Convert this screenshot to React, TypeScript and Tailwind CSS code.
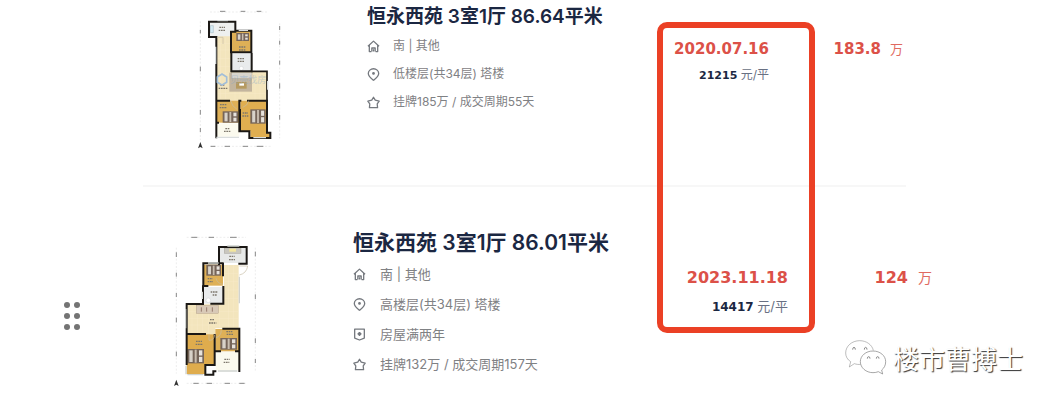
import type { ReactNode } from 'react';

type DetailIcon = 'house' | 'pin' | 'shield' | 'star';

interface Deal {
  id: string;
  title: string;
  details: { icon: DetailIcon; text: string }[];
  date: string;
  unitPrice: string;
  total: string;
}

const first: Deal = {
  id: 'low-floor',
  title: '恒永西苑 3室1厅 86.64平米',
  details: [
    { icon: 'house', text: '南 | 其他' },
    { icon: 'pin', text: '低楼层(共34层) 塔楼' },
    { icon: 'star', text: '挂牌185万 / 成交周期55天' },
  ],
  date: '2020.07.16',
  unitPrice: '21215',
  total: '183.8',
};

const second: Deal = {
  id: 'high-floor',
  title: '恒永西苑 3室1厅 86.01平米',
  details: [
    { icon: 'house', text: '南 | 其他' },
    { icon: 'pin', text: '高楼层(共34层) 塔楼' },
    { icon: 'shield', text: '房屋满两年' },
    { icon: 'star', text: '挂牌132万 / 成交周期157天' },
  ],
  date: '2023.11.18',
  unitPrice: '14417',
  total: '124',
};

const iconShapes: Record<DetailIcon, ReactNode> = {
  house: <path d="M1 6.8 7 1.2l6 5.6M2.5 5.6v6.9h2.2M11.5 5.6v6.9H9.3M5.2 12.5V8.6h3.6v3.9M7 10v2.5" />,
  pin: (
    <>
      <path d="M7 13.2C4.6 11.3 1.4 9 1.4 5.9a5.6 5.1 0 0 1 11.2 0C12.6 9 9.4 11.3 7 13.2Z" />
      <circle cx="7" cy="5.9" r="0.8" fill="currentColor" />
    </>
  ),
  shield: (
    <>
      <path d="M1.8 1.2h10.4v9.6L7 12.9l-5.2-2.1Z" />
      <path d="M7 4.2v4.4M4.8 6.4h4.4M5.7 5.2l2.6 2.4M8.3 5.2 5.7 7.6" />
    </>
  ),
  star: <path d="m7 1.4 1.9 3 4.2 1.2-2.1 3 .4 4H2.6l.4-4-2.1-3 4.2-1.2Z" />,
};

function Icon({ name }: { name: DetailIcon }) {
  return (
    <svg viewBox="0 0 14 14" aria-hidden="true" className="size-[13px] shrink-0 text-[#74787e]"
      fill="none" stroke="currentColor" strokeWidth="1.4" strokeLinejoin="round">
      {iconShapes[name]}
    </svg>
  );
}

function Bed({ x, y, w, h }: { x: number; y: number; w: number; h: number }) {
  return (
    <g>
      <rect x={x} y={y} width={w} height={h} fill="#75655a" />
      <rect x={x + w * 0.12} y={y + 4} width={w * 0.2} height={h - 8} fill="#d8d2c9" />
      <rect x={x + w * 0.44} y={y + 2} width={w * 0.12} height={h - 4} fill="#c9beb0" />
      <rect x={x + w * 0.7} y={y + 4} width={w * 0.2} height={h / 2 - 6} fill="#e6e2dc" />
      <rect x={x + w * 0.7} y={y + h / 2 + 2} width={w * 0.2} height={h / 2 - 6} fill="#e6e2dc" />
    </g>
  );
}

function LowFloorPlan() {
  return (
    <svg viewBox="0 0 360 480" role="img" aria-label="户型图" className="h-[160px] w-[120px] shrink-0">
      {/* dimension lines */}
      <g fill="none" stroke="#c9c9c9" strokeWidth="2">
        <path d="M90 36h172M90 439h182M61 64v356M299 70v345" strokeDasharray="6 5" strokeWidth="1" />
        <path d="M120 34h16M182 34h14M230 34h14M92 439h14M134 439h16M188 439h16M230 439h20" stroke="#888" strokeWidth="3" />
        <path d="M61 90v10M61 200v14M61 330v14M61 384v12M299 78v12M299 122v12M299 182v12M299 250v16M299 345v14" stroke="#888" strokeWidth="3" />
      </g>
      <path d="M61 426l7 19-7-4-7 4Z" fill="#333" />
      {/* rooms */}
      <path d="M110 106h43v108h108v88H110Z" fill="#f3e5bd" />
      <path d="M88 65h78v32h-13v12H88Z" fill="#eef0ef" />
      <path d="M154 94h60v64h-60Z" fill="#deb057" />
      <path d="M154 162h60v52h-60Z" fill="#e9ebec" />
      <path d="M110 302h70v66h-70Z" fill="#deb057" />
      <path d="M181 302h80v95h10v16h-60v-20h-30Z" fill="#e0ae50" />
      <path d="M110 370h68v40h-68Z" fill="#fbfaee" />
      <g stroke="#f8edcf" strokeWidth="1">
        <path d="M122 112v185M136 112v185M165 220v80M180 220v80M225 220v80M240 220v80M112 130h40M112 150h40M112 175h40M112 200h40M112 220h145M112 280h145" />
      </g>
      {/* furniture */}
      <Bed x={169} y={99} w={38} h={24} />
      <Bed x={128} y={334} w={46} h={34} />
      <Bed x={211} y={328} w={46} h={43} />
      <rect x="148" y="218" width="68" height="57" fill="#c3b59e" />
      <rect x="154" y="218" width="62" height="18" fill="#d9d5cc" stroke="#978a78" />
      <rect x="168" y="246" width="32" height="20" fill="#b69a60" />
      <path d="M178 250h14v7h-14Z" fill="#fff" />
      <path d="M91 77h9v21h-9Z" fill="#d4eaf3" stroke="#7895a0" />
      <circle cx="184" cy="205" r="6" fill="#fff" stroke="#b9bcc0" />
      {/* walls */}
      <g fill="none" stroke="#1b1815" strokeWidth="6" strokeLinecap="square">
        <path d="M109 300V111H87V65h79v30h-13v62h61V92h-46M154 160v54h61v-52M109 302v66h5M109 302h38M181 302h-3v92h30v20h63v-16h-10v-96h-57M109 370v42M180 330v62" />
        <path d="M217 214h44v86" strokeWidth="5" />
      </g>
      <path d="M112 62h32M176 91h28M263 243v26M107 140v52M109 412h68M220 413h38" stroke="#d9dddd" strokeWidth="4" />
      <path d="M111 112h18v20M151 300q5 20 20 28M188 322q15-4 18-20" fill="none" stroke="#c7bda4" strokeWidth="2" />
      <path d="M118 82h17M116 91h20M177 141h20M177 150h20M173 176h19M173 184h20M121 255h14M116 265h28M120 314h20M119 323h22M188 339h16M187 348h18M136 386h14M132 394h20" stroke="#7d776c" strokeWidth="4" strokeDasharray="5 2" />
      {/* agency mark */}
      <path d="m112 231 14-9 14 9v16l-14 8-14-8Z" fill="none" stroke="#a2bed8" strokeWidth="5" />
      <text x="151" y="249" fontSize="27" fill="#84a7cc" opacity="0.42" className="font-['Noto_Sans_CJK_SC',sans-serif]">贝壳找房</text>
    </svg>
  );
}

function HighFloorPlan() {
  return (
    <svg viewBox="0 0 360 510" role="img" aria-label="户型图" className="h-[170px] w-[120px] shrink-0">
      <g fill="none" stroke="#c9c9c9">
        <path d="M80 37h178M80 475h178M49 68v378M286 68v370" strokeDasharray="6 5" />
        <path d="M94 37h18M146 37h16M210 37h20M100 475h16M140 475h16M194 475h16M238 475h16" stroke="#888" strokeWidth="3" />
        <path d="M49 82v14M49 143v12M49 204v12M49 278v14M49 380v14M286 80v14M286 208v14M286 340v14M286 402v12" stroke="#888" strokeWidth="3" />
      </g>
      <path d="M49 464l7 19-7-4-7 4Z" fill="#333" />
      <path d="M192 120h44v190h-70v17H82v-89h109Z" fill="#f3e5bd" />
      <path d="M180 67h78v47h-78Z" fill="#e7e9e8" />
      <path d="M130 119h59v63h-59Z" fill="#deb057" />
      <path d="M130 186h60v50h-60Z" fill="#e9ebec" />
      <path d="M80 328h84v92h-29v27H80Z" fill="#dfac4d" />
      <path d="M166 312h72v67h-72Z" fill="#deb057" />
      <path d="M167 381h70v55h-70Z" fill="#fbfaee" />
      <g stroke="#f8edcf">
        <path d="M96 242v83M112 242v83M128 242v83M145 242v83M162 242v66M178 242v66M205 120v190M220 120v190M85 260h150M85 280h150M85 300h150M194 145h40M194 170h40M194 195h40M194 220h40" />
      </g>
      <Bed x={139} y={120} w={44} h={32} />
      <Bed x={82} y={372} w={50} h={43} />
      <Bed x={181} y={339} w={50} h={35} />
      <rect x="109" y="242" width="66" height="23" fill="#d8c9b7" stroke="#9a8575" />
      <path d="M124 247v13M140 247v13M157 247v13" stroke="#96796c" strokeWidth="3" />
      <rect x="193" y="69" width="50" height="16" fill="#c9c7be" stroke="#8b887f" />
      <rect x="208" y="71" width="20" height="9" fill="#f3e69d" />
      <circle cx="145" cy="226" r="7" fill="#fff" stroke="#b9bcc0" />
      <g fill="none" stroke="#1b1815" strokeWidth="6" strokeLinecap="square">
        <path d="M177 66h83v50h-22M177 66v51M188 115h-58v68h12M189 117v34M129 184v53H80v90h55M190 186v50h-36M80 327v90M164 330v90h-28v29h24v-10h6M190 311h48v127M167 379h13M228 379h10" />
      </g>
      <path d="M202 63h36M144 114h32M127 200v22M77 252v58M82 449h48M78 422v26M174 438h58M238 155v80" stroke="#d0d3d0" strokeWidth="4" />
      <path d="M238 150q22-5 25-27h-25M147 329v17q16 0 17-17M168 338q15-4 16-22M168 160q4 16 21 18" fill="none" stroke="#c7bda4" strokeWidth="2" />
      <path d="M208 94h16M207 104h18M143 161h15M143 170h16M152 201h22M158 210h14M150 284h14M147 294h22M108 349h18M107 358h22M199 320h18M200 328h20M193 403h16M191 412h17" stroke="#7d776c" strokeWidth="4" strokeDasharray="5 2" />
    </svg>
  );
}

function DragHandle() {
  return (
    <button type="button" aria-label="拖动" className="grid grid-cols-2 gap-x-[4px] gap-y-[5px]">
      {[0, 1, 2, 3, 4, 5].map(i => (
        <span key={i} className="size-[6px] rounded-full bg-[#747474]" />
      ))}
    </button>
  );
}

function WechatMark() {
  return (
    <div className="absolute right-[35px] bottom-[30px] flex items-center gap-[6px]">
      <svg viewBox="0 0 126 108" aria-hidden="true" className="h-[36px] w-[42px]" fill="#fff" stroke="#7c7c7c" strokeWidth="2">
        <path d="M47 73c-6 1-13 0-19-2l-15 10 4-16C7 59 2 49 2 39 2 18 21 2 44 2c20 0 37 12 41 29" strokeWidth="1.5" />
        <path d="M84 33c-21 0-38 14-38 32s17 33 38 33c6 0 11-1 16-3l13 7-3-12c8-6 12-15 12-25 0-18-17-32-38-32Z" />
        <path d="M23 29q0-7 4-7t4 7M58 29q0-7 4-7t4 7M67 56q0-6 4-6t4 6M94 56q0-6 4-6t4 6" fill="none" stroke="#555" />
      </svg>
      <span className="font-['Noto_Sans_CJK_SC',sans-serif] text-[26px] leading-9 text-white [text-shadow:1px_1px_1px_#333]">楼市曹搏士</span>
    </div>
  );
}

export default function App() {
  return (
    <main className="relative flex items-start overflow-hidden bg-white pr-[126px] font-[Inter,'Noto_Sans_CJK_SC',sans-serif]">
      <div className="w-[143px] shrink-0 pt-[302px] pl-[64px]">
        <DragHandle />
      </div>

      <div className="min-w-0 flex-1">
        <article key={first.id} className="flex h-[185px] items-start pr-[29px] pl-[37px]">
          <LowFloorPlan />
          <div className="min-w-0 flex-1 pt-[5px] pl-[67px] whitespace-nowrap">
            <h2 className="text-[19px] leading-6 font-semibold text-[#1b2742]">{first.title}</h2>
            <ul className="mt-[3px] text-[12px] leading-7 text-[#7f8184]">
              {first.details.map(d => (
                <li key={d.icon} className="flex items-center gap-[13px]">
                  <Icon name={d.icon} />
                  {d.text}
                </li>
              ))}
            </ul>
          </div>
          <div className="pt-[39px] text-right whitespace-nowrap">
            <p className="font-['DejaVu_Sans',sans-serif] text-[15px] leading-5 font-bold text-[#dc5148]">{first.date}</p>
            <p className="mt-[6px] text-[12px] leading-5 text-[#687083]">
              <b className="font-['DejaVu_Sans',sans-serif] text-[11px] text-[#1b2742]">{first.unitPrice}</b> 元/平
            </p>
          </div>
          <p className="flex w-[134px] items-baseline justify-end gap-[9px] pt-[39px] text-[13px] leading-5 text-[#e06a60]">
            <b className="font-['DejaVu_Sans',sans-serif] text-[15px] text-[#dc5148]">{first.total}</b>万
          </p>
        </article>

        <hr className="mr-[26px] border-t-2 border-[#f7f7f7]" />

        <article key={second.id} className="flex h-[219px] items-start pl-[17px]">
          <div className="pt-[38px]">
            <HighFloorPlan />
          </div>
          <div className="min-w-0 flex-1 pt-[44px] pl-[73px] whitespace-nowrap">
            <h2 className="text-[21px] leading-6 font-semibold text-[#1b2742]">{second.title}</h2>
            <ul className="mt-[4px] text-[13px] leading-[30px] text-[#7f8184]">
              {second.details.map(d => (
                <li key={d.icon} className="flex items-center gap-[14px]">
                  <Icon name={d.icon} />
                  {d.text}
                </li>
              ))}
            </ul>
          </div>
          <div className="pt-[81px] text-right whitespace-nowrap">
            <p className="font-['DejaVu_Sans',sans-serif] text-[16px] leading-5 font-bold text-[#dc5148]">{second.date}</p>
            <p className="mt-[8px] text-[13px] leading-5 text-[#687083]">
              <b className="font-['DejaVu_Sans',sans-serif] text-[12px] text-[#1b2742]">{second.unitPrice}</b> 元/平
            </p>
          </div>
          <p className="flex w-[144px] items-baseline justify-end gap-[10px] pt-[81px] text-[14px] leading-5 text-[#e06a60]">
            <b className="font-['DejaVu_Sans',sans-serif] text-[16px] text-[#dc5148]">{second.total}</b>万
          </p>
        </article>
      </div>

      {/* highlight over both deal dates */}
      <div className="pointer-events-none absolute top-[22px] right-[243px] h-[311px] w-[158px] rounded-[10px] border-6 border-[#eb4025]" />
      <WechatMark />
    </main>
  );
}
